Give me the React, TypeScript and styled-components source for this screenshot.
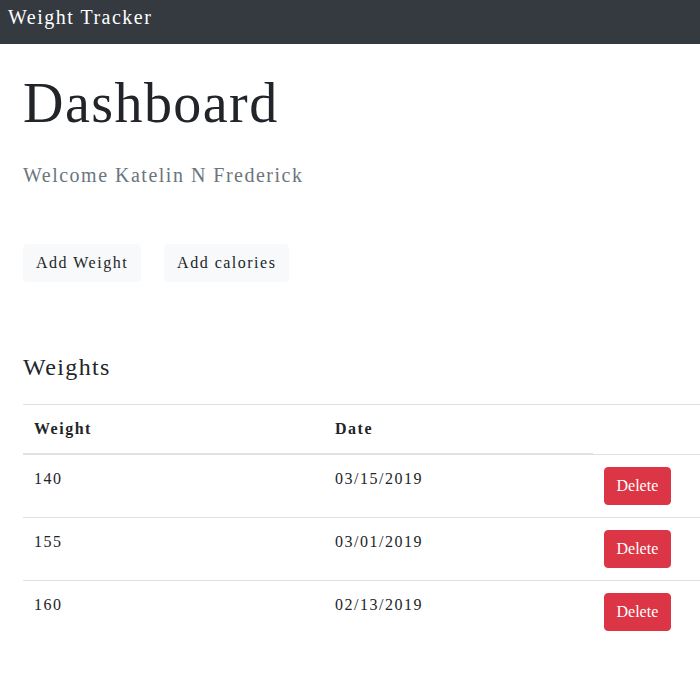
import styled, { createGlobalStyle } from 'styled-components'

const GlobalStyle = createGlobalStyle`
  html, body {
    margin: 0;
    padding: 0;
    background: #fff;
    overflow-x: hidden;
  }
  body {
    font-family: "Liberation Serif", "Times New Roman", serif;
    color: #212529;
    font-size: 16px;
    line-height: 1.5;
    letter-spacing: 1.5px;
  }
`

const NavBar = styled.header`
  height: 44px;
  background: #343a40;
  display: flex;
  align-items: flex-start;
  padding: 0 8px;
`

const Brand = styled.span`
  color: #fff;
  font-size: 20px;
  line-height: 35px;
`

const Main = styled.main`
  padding-left: 23px;
  display: flex;
  flex-direction: column;
`

const Title = styled.h1`
  margin: 25.5px 0 0;
  font-size: 56px;
  font-weight: 400;
  line-height: 1.2;
  letter-spacing: 1.45px;
`

const Lead = styled.p`
  margin: 23.5px 0 0;
  font-size: 20px;
  line-height: 1.5;
  color: #6c757d;
`

const Actions = styled.div`
  display: flex;
  gap: 23px;
  margin-top: 54px;
`

const LightButton = styled.button`
  font-family: inherit;
  font-size: 16px;
  line-height: 1.5;
  letter-spacing: inherit;
  color: #212529;
  background: #f8f9fa;
  border: 1px solid #f8f9fa;
  border-radius: 4px;
  padding: 6px 12px;
  cursor: pointer;
`

const SectionTitle = styled.h3`
  margin: 70.5px 0 0;
  font-size: 24px;
  font-weight: 400;
  line-height: 1.2;
  letter-spacing: 1.4px;
`

const Table = styled.table`
  margin-top: 22.7px;
  width: 100%;
  table-layout: fixed;
  border-collapse: collapse;
`

const Col = styled.col<{ $w?: number }>`
  width: ${({ $w }) => ($w ? `${$w}px` : 'auto')};
`

const HeadCell = styled.th<{ $empty?: boolean }>`
  text-align: left;
  font-weight: 700;
  padding: 12px 11px;
  vertical-align: bottom;
  border-top: 1px solid #dee2e6;
  border-bottom: ${({ $empty }) => ($empty ? 'none' : '2px solid #dee2e6')};
`

const Cell = styled.td`
  padding: 12px 11px;
  vertical-align: top;
  border-top: 1px solid #dee2e6;
`

const DangerButton = styled.button`
  font-family: inherit;
  font-size: 16px;
  line-height: 1.5;
  color: #fff;
  background: #dc3545;
  border: 1px solid #dc3545;
  border-radius: 4px;
  padding: 6px 11.5px;
  letter-spacing: 0;
  cursor: pointer;
`

const weights = [
  { weight: 140, date: '03/15/2019' },
  { weight: 155, date: '03/01/2019' },
  { weight: 160, date: '02/13/2019' },
]

export default function App() {
  return (
    <>
      <GlobalStyle />
      <NavBar>
        <Brand>Weight Tracker</Brand>
      </NavBar>
      <Main>
        <Title>Dashboard</Title>
        <Lead>Welcome Katelin N Frederick</Lead>
        <Actions>
          <LightButton>Add Weight</LightButton>
          <LightButton>Add calories</LightButton>
        </Actions>
        <SectionTitle>Weights</SectionTitle>
        <Table>
          <colgroup>
            <Col $w={301} />
            <Col $w={269} />
            <Col />
          </colgroup>
          <thead>
            <tr>
              <HeadCell>Weight</HeadCell>
              <HeadCell>Date</HeadCell>
              <HeadCell $empty />
            </tr>
          </thead>
          <tbody>
            {weights.map(({ weight, date }) => (
              <tr key={date}>
                <Cell>{weight}</Cell>
                <Cell>{date}</Cell>
                <Cell>
                  <DangerButton>Delete</DangerButton>
                </Cell>
              </tr>
            ))}
          </tbody>
        </Table>
      </Main>
    </>
  )
}
